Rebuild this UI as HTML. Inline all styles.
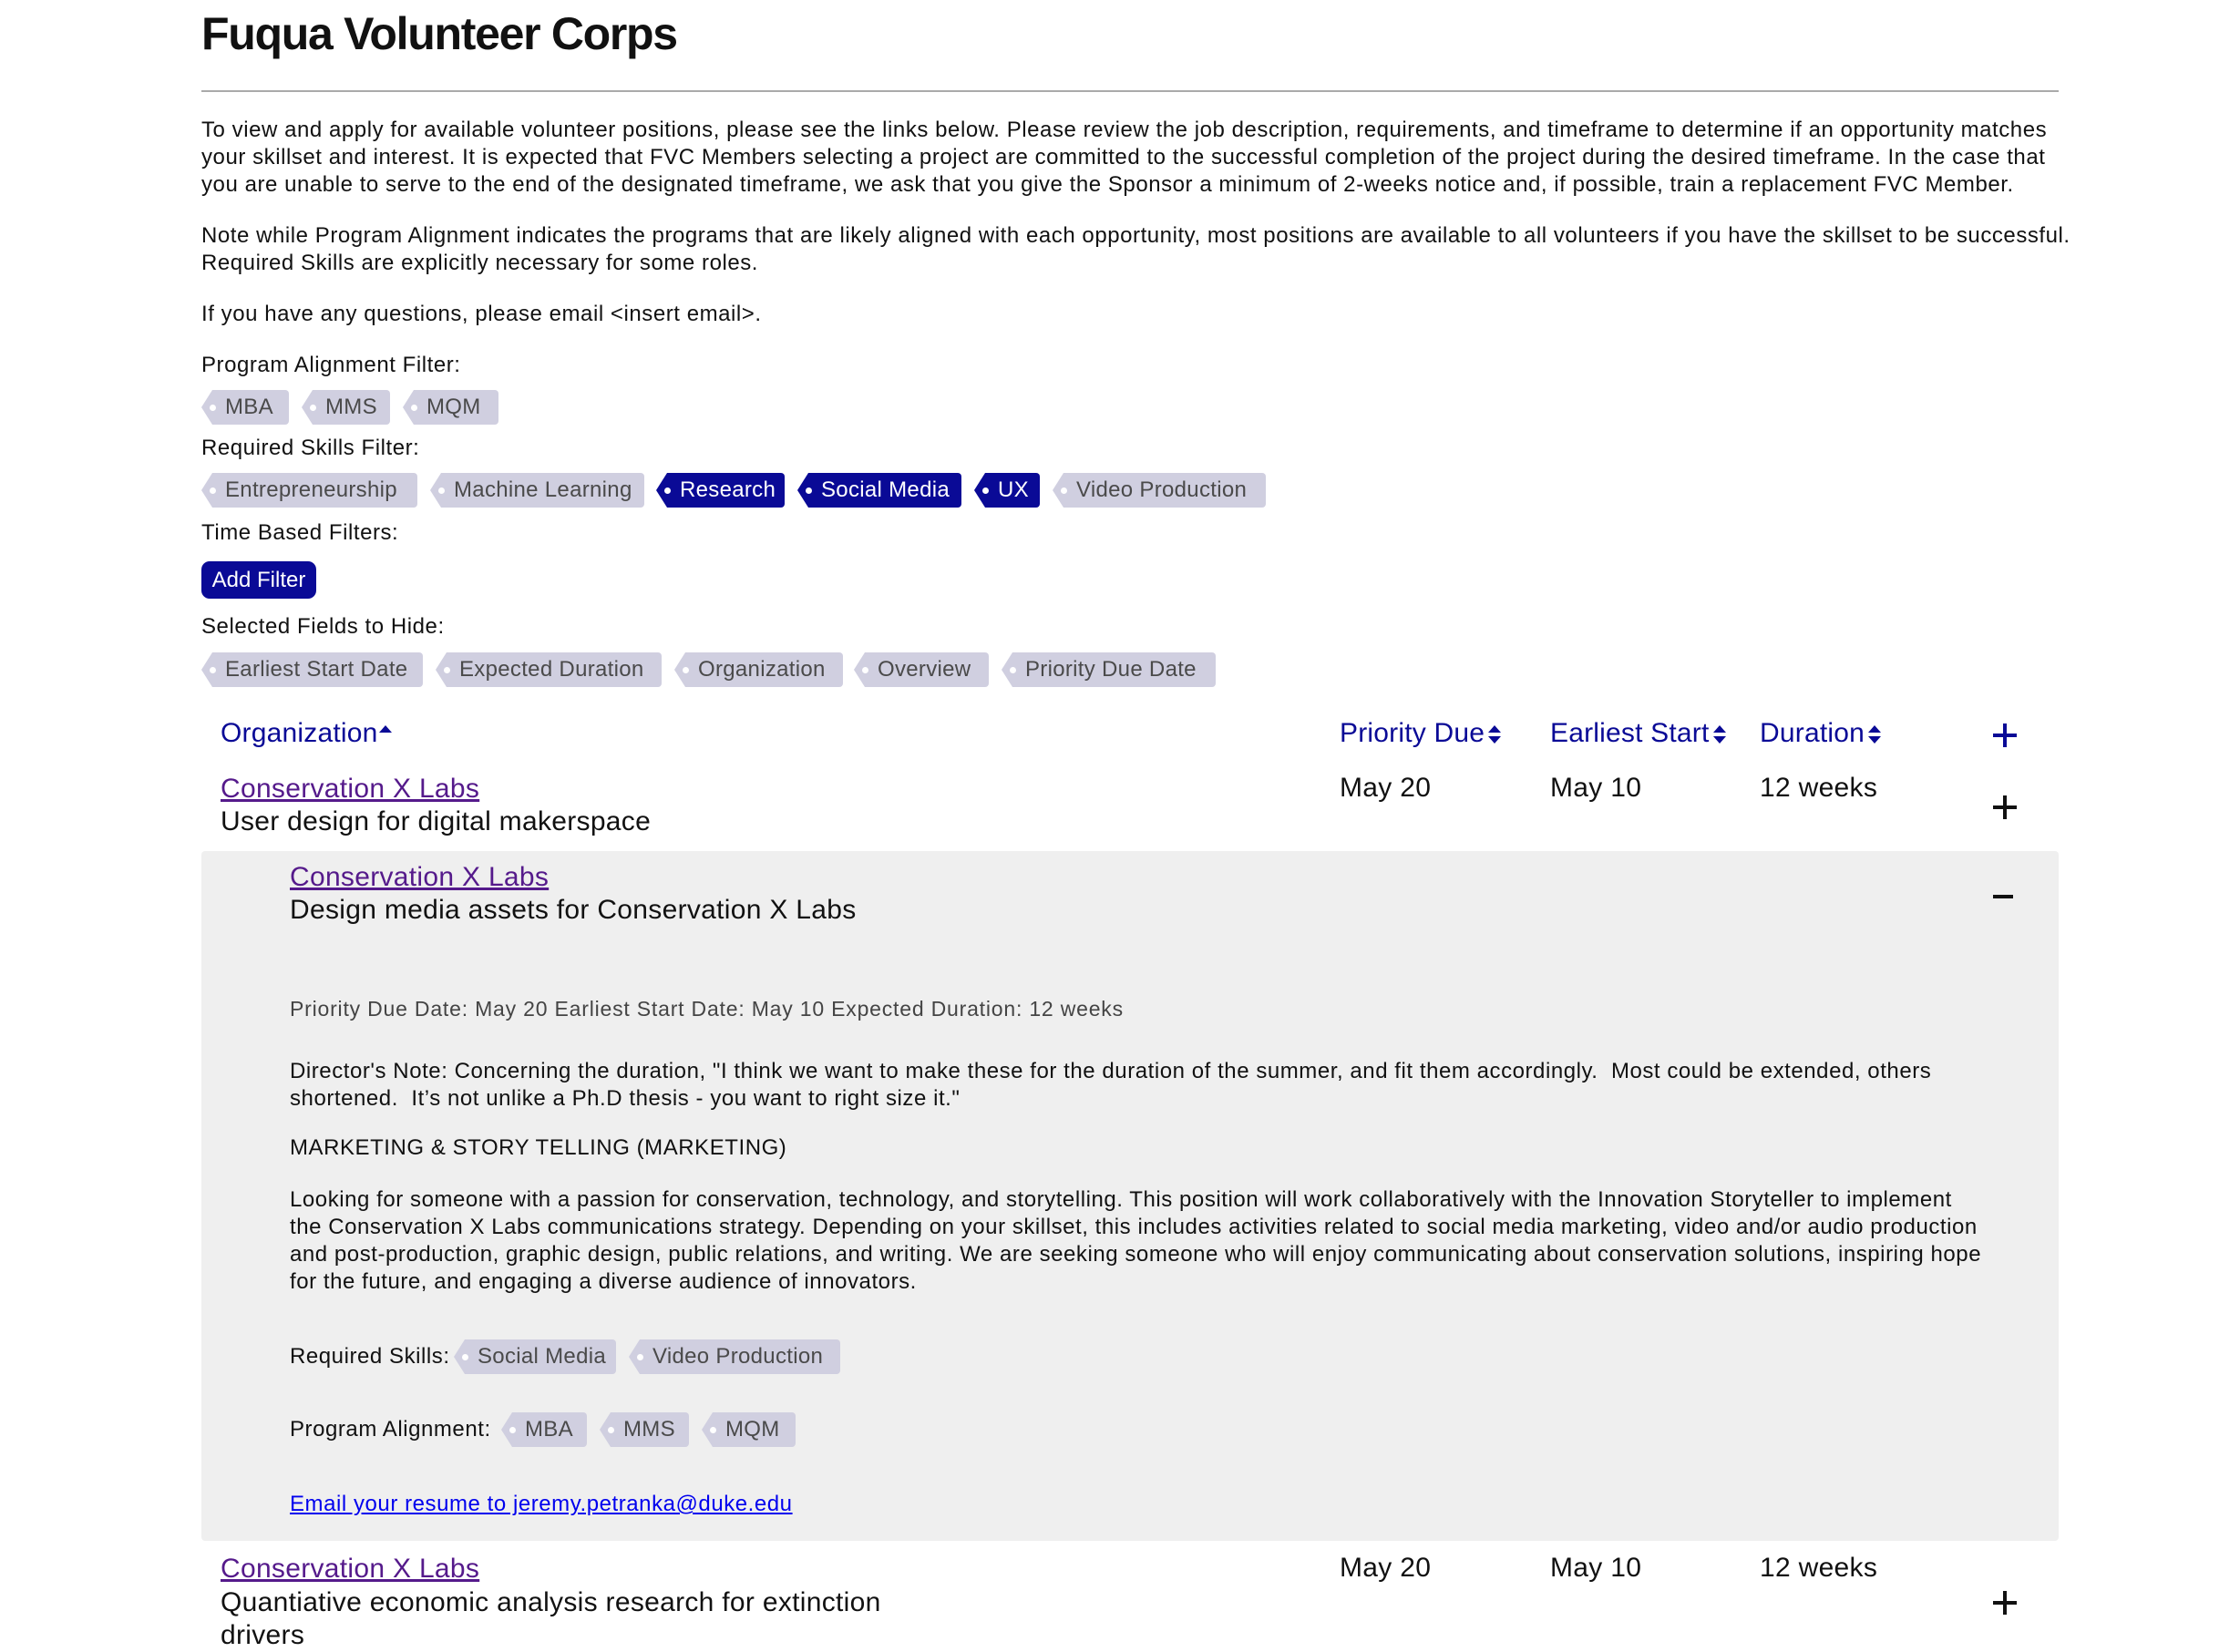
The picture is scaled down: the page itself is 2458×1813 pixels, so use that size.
<!DOCTYPE html>
<html><head><meta charset="utf-8"><style>
body{margin:0;width:2458px;height:1798px;overflow:hidden;background:#fff;font-family:"Liberation Sans",sans-serif;color:#111;position:relative}
.a{position:absolute;white-space:nowrap}
.t{font-size:24px;line-height:30px;letter-spacing:0.55px}
.tag{position:absolute;height:38px;background:#d0cfe0;color:#4a4a4a;font-size:24px;line-height:38px;letter-spacing:0.3px;clip-path:polygon(12px 0,100% 0,100% 100%,12px 100%,0 50%);border-radius:0 4px 4px 0;box-sizing:border-box;padding-left:26px;white-space:nowrap}
.tag::before{content:"";position:absolute;left:9px;top:16px;width:7px;height:7px;border-radius:50%;background:#fff}
.sel{background:#0a0a96;color:#fff}
.h{font-size:30px;color:#0a0a96;letter-spacing:0.2px}
.r{font-size:30px;letter-spacing:0.3px}
.lk{color:#551a8b;text-decoration:underline}
.arr{display:inline-block;width:16px;vertical-align:middle;margin-left:3px}
.plus{position:absolute;width:26px;height:26px}
.plus::before{content:"";position:absolute;left:11px;top:0;width:4px;height:26px;background:currentColor}
.plus::after{content:"";position:absolute;left:0;top:11px;width:26px;height:4px;background:currentColor}
</style></head><body>
<div class="a" style="left:221px;top:8px;font-size:50px;font-weight:bold;letter-spacing:-1.3px;color:#111">Fuqua Volunteer Corps</div>
<div class="a" style="left:221px;top:99px;width:2038px;height:2px;background:#aaa"></div>
<div class="a t" style="left:221px;top:128px">To view and apply for available volunteer positions, please see the links below. Please review the job description, requirements, and timeframe to determine if an opportunity matches<br>your skillset and interest. It is expected that FVC Members selecting a project are committed to the successful completion of the project during the desired timeframe. In the case that<br>you are unable to serve to the end of the designated timeframe, we ask that you give the Sponsor a minimum of 2-weeks notice and, if possible, train a replacement FVC Member.</div>
<div class="a t" style="left:221px;top:244px">Note while Program Alignment indicates the programs that are likely aligned with each opportunity, most positions are available to all volunteers if you have the skillset to be successful.<br>Required Skills are explicitly necessary for some roles.</div>
<div class="a t" style="left:221px;top:330px">If you have any questions, please email &lt;insert email&gt;.</div>
<div class="a t" style="left:221px;top:386px">Program Alignment Filter:</div>
<div class="tag" style="left:221px;top:428px;width:96px">MBA</div>
<div class="tag" style="left:331px;top:428px;width:97px">MMS</div>
<div class="tag" style="left:442px;top:428px;width:105px">MQM</div>
<div class="a t" style="left:221px;top:477px">Required Skills Filter:</div>
<div class="tag" style="left:221px;top:519px;width:237px">Entrepreneurship</div>
<div class="tag" style="left:472px;top:519px;width:235px">Machine Learning</div>
<div class="tag sel" style="left:720px;top:519px;width:141px">Research</div>
<div class="tag sel" style="left:875px;top:519px;width:180px">Social Media</div>
<div class="tag sel" style="left:1069px;top:519px;width:72px">UX</div>
<div class="tag" style="left:1155px;top:519px;width:234px">Video Production</div>
<div class="a t" style="left:221px;top:570px">Time Based Filters:</div>
<div class="a" style="left:221px;top:616px;width:126px;height:41px;background:#0a0a96;color:#fff;border-radius:9px;font-size:24px;line-height:41px;text-align:center;letter-spacing:0px">Add Filter</div>
<div class="a t" style="left:221px;top:673px">Selected Fields to Hide:</div>
<div class="tag" style="left:221px;top:716px;width:243px">Earliest Start Date</div>
<div class="tag" style="left:478px;top:716px;width:248px">Expected Duration</div>
<div class="tag" style="left:740px;top:716px;width:185px">Organization</div>
<div class="tag" style="left:937px;top:716px;width:148px">Overview</div>
<div class="tag" style="left:1099px;top:716px;width:235px">Priority Due Date</div>

<div class="a h" style="left:242px;top:788px">Organization<svg width="16" height="14" style="vertical-align:top;margin-top:6px"><path d="M1 10 L8 2 L15 10Z" fill="#0a0a96"/></svg></div>
<div class="a h" style="left:1470px;top:788px">Priority Due<svg class="arr" width="16" height="26" viewBox="0 0 16 26"><path d="M1 11L8 3L15 11ZM1 15L8 23L15 15Z" fill="#0a0a96"/></svg></div>
<div class="a h" style="left:1701px;top:788px">Earliest Start<svg class="arr" width="16" height="26" viewBox="0 0 16 26"><path d="M1 11L8 3L15 11ZM1 15L8 23L15 15Z" fill="#0a0a96"/></svg></div>
<div class="a h" style="left:1931px;top:788px">Duration<svg class="arr" width="16" height="26" viewBox="0 0 16 26"><path d="M1 11L8 3L15 11ZM1 15L8 23L15 15Z" fill="#0a0a96"/></svg></div>
<div class="plus" style="left:2187px;top:794px;color:#0a0a96"></div>

<div class="a r lk" style="left:242px;top:849px">Conservation X Labs</div>
<div class="a r" style="left:242px;top:885px">User design for digital makerspace</div>
<div class="a r" style="left:1470px;top:848px">May 20</div>
<div class="a r" style="left:1701px;top:848px">May 10</div>
<div class="a r" style="left:1931px;top:848px">12 weeks</div>
<div class="plus" style="left:2187px;top:873px;color:#111"></div>

<div class="a" style="left:221px;top:934px;width:2038px;height:757px;background:#efefef;border-radius:4px"></div>
<div class="a r lk" style="left:318px;top:946px">Conservation X Labs</div>
<div class="a r" style="left:318px;top:982px">Design media assets for Conservation X Labs</div>
<div class="a" style="left:2187px;top:982px;width:22px;height:4px;background:#111"></div>
<div class="a t" style="left:318px;top:1092px;color:#444;font-size:23px;letter-spacing:0.8px">Priority Due Date: May 20 Earliest Start Date: May 10 Expected Duration: 12 weeks</div>
<div class="a t" style="left:318px;top:1161px">Director's Note: Concerning the duration, "I think we want to make these for the duration of the summer, and fit them accordingly.&nbsp; Most could be extended, others<br>shortened.&nbsp; It’s not unlike a Ph.D thesis - you want to right size it."</div>
<div class="a t" style="left:318px;top:1245px">MARKETING &amp; STORY TELLING (MARKETING)</div>
<div class="a t" style="left:318px;top:1302px">Looking for someone with a passion for conservation, technology, and storytelling. This position will work collaboratively with the Innovation Storyteller to implement<br>the Conservation X Labs communications strategy. Depending on your skillset, this includes activities related to social media marketing, video and/or audio production<br>and post-production, graphic design, public relations, and writing. We are seeking someone who will enjoy communicating about conservation solutions, inspiring hope<br>for the future, and engaging a diverse audience of innovators.</div>
<div class="a t" style="left:318px;top:1474px">Required Skills:</div>
<div class="tag" style="left:498px;top:1470px;width:178px">Social Media</div>
<div class="tag" style="left:690px;top:1470px;width:232px">Video Production</div>
<div class="a t" style="left:318px;top:1554px">Program Alignment:</div>
<div class="tag" style="left:550px;top:1550px;width:94px">MBA</div>
<div class="tag" style="left:658px;top:1550px;width:98px">MMS</div>
<div class="tag" style="left:770px;top:1550px;width:103px">MQM</div>
<div class="a t" style="left:318px;top:1636px;color:#0000ee;text-decoration:underline">Email your resume to jeremy.petranka@duke.edu</div>

<div class="a r lk" style="left:242px;top:1705px">Conservation X Labs</div>
<div class="a r" style="left:242px;top:1741px;line-height:36px">Quantiative economic analysis research for extinction<br>drivers</div>
<div class="a r" style="left:1470px;top:1704px">May 20</div>
<div class="a r" style="left:1701px;top:1704px">May 10</div>
<div class="a r" style="left:1931px;top:1704px">12 weeks</div>
<div class="plus" style="left:2187px;top:1746px;color:#111"></div>
</body></html>
